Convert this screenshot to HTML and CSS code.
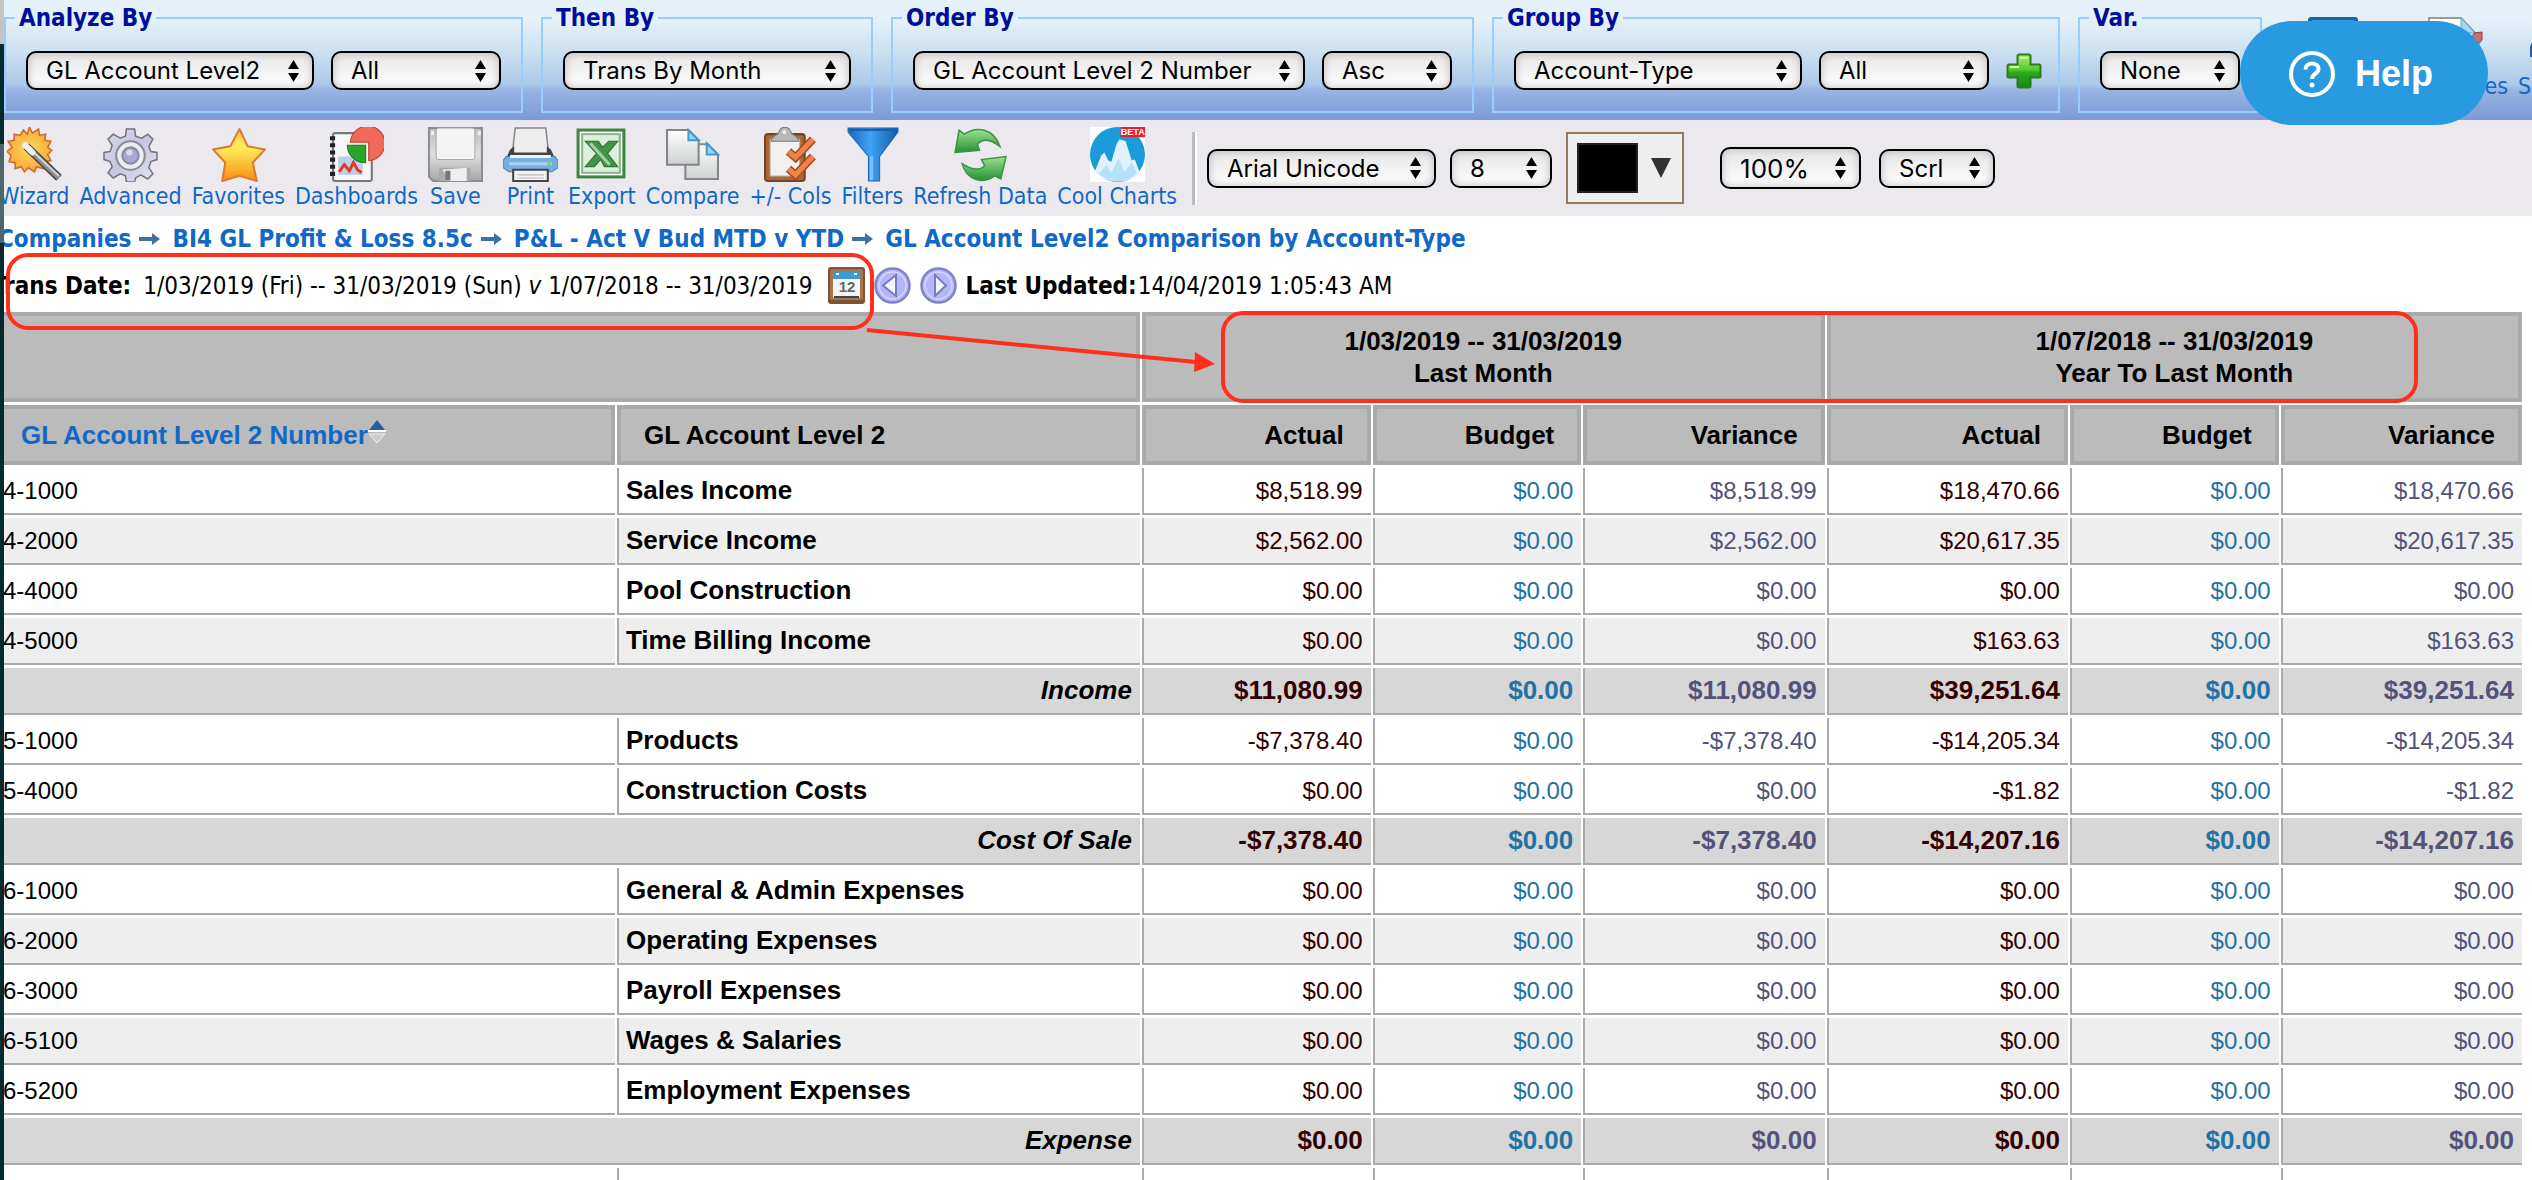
FILE: index.html
```html
<!DOCTYPE html>
<html lang="en">
<head>
    <meta charset="UTF-8">
    <title>GL Account Level2 Comparison by Account-Type</title>
    <link rel="stylesheet" href="styles.css">
</head>
<body>
    <div class="edge"></div>
    <main class="app">
        <header class="criteria">
            <fieldset>
                <legend>Analyze By</legend>
                <div class="controls">
                    <select class="w-large" aria-label="Analyze by field"><option>GL Account Level2</option></select>
                    <select class="w-medium" aria-label="Analyze by filter"><option>All</option></select>
                </div>
            </fieldset>
            <fieldset>
                <legend>Then By</legend>
                <div class="controls">
                    <select class="w-large" aria-label="Then by field"><option>Trans By Month</option></select>
                </div>
            </fieldset>
            <fieldset>
                <legend>Order By</legend>
                <div class="controls">
                    <select class="w-xlarge" aria-label="Order by field"><option>GL Account Level 2 Number</option></select>
                    <select class="w-small" aria-label="Order direction"><option>Asc</option></select>
                </div>
            </fieldset>
            <fieldset class="group-by">
                <legend>Group By</legend>
                <div class="controls">
                    <select class="w-large" aria-label="Group by field"><option>Account-Type</option></select>
                    <select class="w-medium" aria-label="Group by filter"><option>All</option></select>
                    <button class="icon-button" aria-label="Add group">
                        <svg width="36" height="36" viewBox="0 0 36 36">
                            <defs><linearGradient id="plus" x1="0" y1="0" x2="0" y2="1"><stop offset="0" stop-color="#a8ef6c"/><stop offset=".45" stop-color="#55cc2c"/><stop offset=".55" stop-color="#2fa81c"/><stop offset="1" stop-color="#128a12"/></linearGradient></defs>
                            <path d="M13 1.500h10a1.500 1.500 0 0 1 1.500 1.500v8.500H33a1.500 1.500 0 0 1 1.500 1.500v10a1.500 1.500 0 0 1-1.500 1.500h-8.500V33a1.500 1.500 0 0 1-1.500 1.500H13a1.500 1.500 0 0 1-1.500-1.500v-8.500H3A1.500 1.500 0 0 1 1.500 23V13A1.500 1.500 0 0 1 3 11.500h8.500V3A1.500 1.500 0 0 1 13 1.500z" fill="url(#plus)" stroke="#2c7d1c" stroke-width="2"/>
                            <path d="M14 5h8M4 14h9" stroke="#d6ffb4" stroke-width="2"/>
                        </svg>
                    </button>
                </div>
            </fieldset>
            <fieldset>
                <legend>Var.</legend>
                <div class="controls">
                    <select class="w-variance" aria-label="Variance"><option>None</option></select>
                </div>
            </fieldset>
            <nav class="shortcuts">
                <a href="#" class="screen" aria-label="Screen">
                    <svg width="50" height="54" viewBox="0 0 50 54"><rect x="0" width="50" height="44" rx="3" fill="#1463ad"/><rect x="4" y="3" width="42" height="34" fill="#3f9be0"/></svg>
                </a>
                <a href="#" class="pages">
                    <svg width="55" height="54" viewBox="0 0 55 54"><path d="M1 1h32l14 15v36H1z" fill="#fff" stroke="#999" stroke-width="2"/><path d="M33 1l14 15H33z" fill="#a9d8f5" stroke="#5ba4d2"/><path d="M42 24l4-8 8-1v8l-7 8z" fill="#cc6b6b" stroke="#8d3c3c"/></svg>
                    <span>es</span>
                </a>
                <a href="#" class="more">
                    <svg width="50" height="54" viewBox="0 0 50 54"><path d="M0 30L8 10h30v30H0z" fill="#2a5ca8"/></svg>
                    <span>S</span>
                </a>
            </nav>
        </header>

        <div class="toolbar">
            <a href="#">
                <svg viewBox="0 0 54 54">
                    <defs><radialGradient id="sun"><stop offset="0" stop-color="#ffd95e"/><stop offset="1" stop-color="#f8a93a"/></radialGradient></defs>
                    <path d="M22 0l3 6 6-4 1 6 6-1-1 6 6 1-3 6 4 3-4 4 3 6-6 1-1 7-7-2-2 5-6-4-4 4-3-5-6 2v-6l-6-1 2-6-4-4 5-4-4-6 6-1v-6l6 1 3-5 4 4z" fill="url(#sun)" stroke="#cf6a24" stroke-width="1.500"/>
                    <path d="M19 19L51 50" stroke="#444" stroke-width="8"/>
                    <path d="M19 19L51 50" stroke="#8d8d8d" stroke-width="5"/>
                    <path d="M20 19L51 48" stroke="#d2d2d2" stroke-width="2"/>
                    <path d="M18 18l7 7" stroke="#eee" stroke-width="6" stroke-linecap="round"/>
                </svg>
                <span>Wizard</span>
            </a>
            <a href="#">
                <svg viewBox="0 0 54 54">
                    <defs><linearGradient id="gear" x1="0" y1="0" x2="1" y2="1"><stop offset="0" stop-color="#d9d9e6"/><stop offset=".5" stop-color="#c6c6e0"/><stop offset="1" stop-color="#e6e6f2"/></linearGradient></defs>
                    <path d="M23 2h8l1 7 6 2 6-4 5 5-4 7 2 5 6 1v7l-6 2-2 6 4 6-5 5-7-4-5 3-1 4h-8l-1-6-5-2-7 4-5-5 4-6-2-5-6-2v-7l6-1 2-6-4-6 5-5 7 4 5-2z" fill="url(#gear)" stroke="#74747f" stroke-width="1.500"/>
                    <circle cx="27" cy="28" r="14" fill="#ececf2" stroke="#8b8b95" stroke-width="2"/>
                    <circle cx="27" cy="28" r="8" fill="#a9a9cf" stroke="#8a8aa0" stroke-width="2"/>
                    <circle cx="26" cy="25" r="3" fill="#dcdcf0"/>
                </svg>
                <span>Advanced</span>
            </a>
            <a href="#">
                <svg viewBox="0 0 54 54">
                    <defs><linearGradient id="star" x1="0" y1="0" x2="0" y2="1"><stop offset="0" stop-color="#ffc83a"/><stop offset=".35" stop-color="#fff05a"/><stop offset="1" stop-color="#f78c12"/></linearGradient></defs>
                    <path d="M28 2l8 17 17 3-12 13 4 18-17-5-17 5 3-18L2 22l17-3z" fill="url(#star)" stroke="#d97a35" stroke-width="2" stroke-linejoin="round"/>
                </svg>
                <span>Favorites</span>
            </a>
            <a href="#">
                <svg viewBox="0 0 54 54">
                    <rect x="4" y="6" width="38" height="47" rx="2" fill="#f6f6f6" stroke="#777" stroke-width="2"/>
                    <rect x="9" y="29" width="24" height="18" fill="#bccdee"/>
                    <path d="M1 11h5M1 18h5M1 25h5M1 32h5M1 39h5M1 46h5" stroke="#222" stroke-width="4"/>
                    <path d="M21 15A17 17 0 1 1 39 33V15z" fill="#f0695a" stroke="#c43d30"/>
                    <path d="M18 18h18v17A17 17 0 0 1 18 18z" fill="#2aa52c" stroke="#177a1b"/>
                    <path d="M10 44l5-7 5 6 4-8 4 7 4 3" fill="none" stroke="#dc3b22" stroke-width="3"/>
                </svg>
                <span>Dashboards</span>
            </a>
            <a href="#">
                <svg viewBox="0 0 54 54">
                    <defs><linearGradient id="disk" x1="0" y1="0" x2="0" y2="1"><stop offset="0" stop-color="#bdbdbd"/><stop offset=".5" stop-color="#dedede"/><stop offset="1" stop-color="#a6a6a6"/></linearGradient></defs>
                    <path d="M1 1h52v52H5l-4-4z" fill="url(#disk)" stroke="#8d8d8d" stroke-width="2"/>
                    <rect x="8" y="1" width="38" height="31" rx="3" fill="#f4f4f4" stroke="#aaa"/>
                    <path d="M11 40h31v13H11z" fill="#aaa"/><path d="M14 42l24-2v13H22z" fill="#efefef"/><path d="M17 43h5v9h-5z" fill="#777"/>
                    <path d="M3 4h3v4H3zM49 4h3v4h-3z" fill="#eee"/>
                </svg>
                <span>Save</span>
            </a>
            <a href="#" class="print">
                <svg viewBox="0 0 54 54">
                    <path d="M12 1h30l3 27H9z" fill="#eee" stroke="#888" stroke-width="1.500"/>
                    <path d="M7 22l4-3v6h32v-6l4 3 5 11H2z" fill="#444"/>
                    <path d="M3 29h48l3 4v7l-6 4H6l-6-4v-7z" fill="#76aee2" stroke="#477db4"/>
                    <path d="M7 29h40" stroke="#eaf5ff" stroke-width="3"/><path d="M6 36h42" stroke="#a8d1f5" stroke-width="3"/>
                    <path d="M10 42h34v11H10z" fill="#f3f3f3" stroke="#444" stroke-width="2"/><path d="M14 47h26M14 50h26" stroke="#bbb"/><circle cx="45" cy="36" r="2" fill="#6fe04f"/>
                </svg>
                <span>Print</span>
            </a>
            <a href="#">
                <svg viewBox="0 0 54 54">
                    <rect x="4" y="3" width="45" height="46" fill="#fff" stroke="#3e8540" stroke-width="3"/>
                    <rect x="8" y="7" width="37" height="38" fill="#dcefdc" stroke="#87b787" stroke-width="2"/>
                    <path d="M11 14h13l4 6 6-6h9L33 26l10 13H30l-4-7-6 7h-9l11-13z" fill="#459348" stroke="#286c2c"/>
                    <path d="M16 16l19 21" stroke="#a0d3a2" stroke-width="3"/>
                </svg>
                <span>Export</span>
            </a>
            <a href="#">
                <svg viewBox="0 0 54 54">
                    <defs><linearGradient id="paper" x1="0" y1="0" x2="0" y2="1"><stop offset="0" stop-color="#fff"/><stop offset="1" stop-color="#ccd0d0"/></linearGradient></defs>
                    <path d="M20 17h22l10 10v24H20z" fill="url(#paper)" stroke="#858585" stroke-width="2"/><path d="M41 16l11 11H41z" fill="#9bd6fa" stroke="#4597d2" stroke-width="2"/>
                    <path d="M2 3h21l10 10v24H2z" fill="url(#paper)" stroke="#858585" stroke-width="2"/><path d="M23 3l10 10H23z" fill="#9bd6fa" stroke="#4597d2" stroke-width="2"/>
                </svg>
                <span>Compare</span>
            </a>
            <a href="#">
                <svg viewBox="0 0 54 54">
                    <rect x="2" y="7" width="39" height="46" rx="3" fill="#a96836" stroke="#784320" stroke-width="2"/>
                    <path d="M7 12h29v36H7z" fill="#f1f1f1" stroke="#b6b6b6"/>
                    <path d="M8 14c0-6 7-5 8-10 2-5 9-5 11 0 1 5 8 4 8 10z" fill="#b7b7b7" stroke="#777"/><circle cx="21" cy="5" r="2" fill="#eee"/>
                    <path d="M25 24l7 6 17-18M25 41l7 6 17-18" fill="none" stroke="#9f4b1d" stroke-width="8"/>
                    <path d="M25 24l7 6 17-18M25 41l7 6 17-18" fill="none" stroke="#ef8149" stroke-width="5"/>
                </svg>
                <span>+/- Cols</span>
            </a>
            <a href="#">
                <svg viewBox="0 0 54 54">
                    <defs><linearGradient id="funnel"><stop offset="0" stop-color="#1668bd"/><stop offset=".45" stop-color="#3fa2f5"/><stop offset="1" stop-color="#1259aa"/></linearGradient></defs>
                    <path d="M3 1h49v4L34 29v24H23V29L3 5z" fill="url(#funnel)" stroke="#2167ad"/>
                    <path d="M4 2h47v2H4z" fill="#1b5fa5"/><path d="M26 29v23" stroke="#79c2ff" stroke-width="3"/>
                </svg>
                <span>Filters</span>
            </a>
            <a href="#">
                <svg viewBox="0 0 54 54">
                    <defs><linearGradient id="fresh" x1="0" y1="0" x2="0" y2="1"><stop offset="0" stop-color="#9be38b"/><stop offset="1" stop-color="#269036"/></linearGradient></defs>
                    <path d="M6 3l5 4C23-1 40 1 46 19c-9-7-17-8-22-2l2 6L2 25z" fill="url(#fresh)" stroke="#3c9447" stroke-width="1.500"/>
                    <path d="M52 29l-5 22-6-3C29 57 13 52 9 36c9 6 17 7 22 2l-3-6z" fill="url(#fresh)" stroke="#3c9447" stroke-width="1.500"/>
                </svg>
                <span>Refresh Data</span>
            </a>
            <a href="#">
                <svg viewBox="0 0 54 54">
                    <rect width="54" height="54" fill="#fff"/><circle cx="27" cy="27" r="27" fill="#1b9bd9"/>
                    <path d="M5 43l6-15 3-3 4 8 3 1 5-17 3-5 6 2 6 19 3-1 5 13C40 56 13 57 5 43z" fill="#e2f1fb"/>
                    <path d="M9 46l7-9 5 8 7-14 6 13 7-9 5 10C35 57 19 55 9 46z" fill="#b5e0f7"/>
                    <rect x="30" width="24" height="10" fill="#ee1c2e"/><text x="42" y="8" class="beta">BETA</text>
                </svg>
                <span>Cool Charts</span>
            </a>
            <div class="divider"></div>
            <div class="format">
                <select class="font-name" aria-label="Font"><option>Arial Unicode</option></select>
                <select class="font-size" aria-label="Font size"><option>8</option></select>
                <button class="color-picker" aria-label="Font colour"><span class="swatch"></span><span class="caret"></span></button>
                <select class="zoom" aria-label="Zoom"><option>100%</option></select>
                <select class="scroll-mode" aria-label="Scroll mode"><option>Scrl</option></select>
            </div>
        </div>

        <nav class="breadcrumbs">
            <a href="#">Companies</a>
            <svg width="21" height="12" viewBox="0 0 21 12"><path d="M0 4h13V0l8 6-8 6V8H0z" fill="#3f719f"/></svg>
            <a href="#">BI4 GL Profit &amp; Loss 8.5c</a>
            <svg width="21" height="12" viewBox="0 0 21 12"><path d="M0 4h13V0l8 6-8 6V8H0z" fill="#3f719f"/></svg>
            <a href="#">P&amp;L - Act V Bud MTD v YTD</a>
            <svg width="21" height="12" viewBox="0 0 21 12"><path d="M0 4h13V0l8 6-8 6V8H0z" fill="#3f719f"/></svg>
            <a href="#">GL Account Level2 Comparison by Account-Type</a>
        </nav>

        <div class="dates">
            <b>Trans Date:</b>
            <span class="range">1/03/2019 (Fri) -- 31/03/2019 (Sun) <i>v</i> 1/07/2018 -- 31/03/2019</span>
            <button class="icon-button" aria-label="Choose dates">
                <svg width="37" height="37" viewBox="0 0 37 37"><rect width="37" height="37" rx="3" fill="#7c5334"/><rect x="2" y="2" width="33" height="31" rx="2" fill="#a9744c"/><rect x="5" y="5" width="27" height="26" rx="1" fill="#f5f5f5"/><path d="M5 5h27v7H5z" fill="#3b9bd8"/><path d="M8 7h3M26 7h3" stroke="#fff" stroke-width="2"/><path d="M6 30h25" stroke="#444" stroke-width="2"/><text x="19" y="25" class="day">12</text></svg>
            </button>
            <button class="icon-button" aria-label="Previous period">
                <svg width="37" height="37" viewBox="0 0 37 37"><circle cx="18.500" cy="18.500" r="17" fill="#b5b5fa" stroke="#8383c8" stroke-width="2.500"/><circle cx="18.500" cy="18.500" r="13.500" fill="none" stroke="#d7d7ff" stroke-width="1.500"/><path d="M22 8v21L9 18.500z" fill="#f4f4ff" stroke="#7979bd" stroke-width="2"/></svg>
            </button>
            <button class="icon-button" aria-label="Next period">
                <svg width="37" height="37" viewBox="0 0 37 37"><circle cx="18.500" cy="18.500" r="17" fill="#b5b5fa" stroke="#8383c8" stroke-width="2.500"/><circle cx="18.500" cy="18.500" r="13.500" fill="none" stroke="#d7d7ff" stroke-width="1.500"/><path d="M15 8v21l11-10.500z" fill="#f4f4ff" stroke="#7979bd" stroke-width="2"/></svg>
            </button>
            <b>Last Updated:</b>
            <span class="updated">14/04/2019 1:05:43 AM</span>
        </div>

        <table>
            <colgroup>
                <col class="col-number"><col class="col-name">
                <col class="col-actual"><col class="col-budget"><col class="col-variance">
                <col class="col-variance"><col class="col-budget"><col class="col-variance">
            </colgroup>
            <thead>
                <tr class="periods">
                    <th colspan="2"></th>
                    <th colspan="3">1/03/2019 -- 31/03/2019<br>Last Month</th>
                    <th colspan="3">1/07/2018 -- 31/03/2019<br>Year To Last Month</th>
                </tr>
                <tr class="columns">
                    <th class="name"><a href="#">GL Account Level 2 Number<svg width="18" height="24" viewBox="0 0 18 24"><path d="M9 0l8 10H1z" fill="#2a6099"/><path d="M0 11h18" stroke="#fff" stroke-width="2"/><path d="M1 14h16l-8 9z" fill="#ccc" stroke="#eee"/></svg></a></th>
                    <th class="name">GL Account Level 2</th>
                    <th>Actual</th><th>Budget</th><th>Variance</th>
                    <th>Actual</th><th>Budget</th><th>Variance</th>
                </tr>
            </thead>
            <tbody>
                <tr><td>4-1000</td><th>Sales Income</th><td class="a">$8,518.99</td><td class="b">$0.00</td><td class="v">$8,518.99</td><td class="a">$18,470.66</td><td class="b">$0.00</td><td class="v">$18,470.66</td></tr>
                <tr class="alt"><td>4-2000</td><th>Service Income</th><td class="a">$2,562.00</td><td class="b">$0.00</td><td class="v">$2,562.00</td><td class="a">$20,617.35</td><td class="b">$0.00</td><td class="v">$20,617.35</td></tr>
                <tr><td>4-4000</td><th>Pool Construction</th><td class="a">$0.00</td><td class="b">$0.00</td><td class="v">$0.00</td><td class="a">$0.00</td><td class="b">$0.00</td><td class="v">$0.00</td></tr>
                <tr class="alt"><td>4-5000</td><th>Time Billing Income</th><td class="a">$0.00</td><td class="b">$0.00</td><td class="v">$0.00</td><td class="a">$163.63</td><td class="b">$0.00</td><td class="v">$163.63</td></tr>
                <tr class="total"><th colspan="2">Income</th><td class="a">$11,080.99</td><td class="b">$0.00</td><td class="v">$11,080.99</td><td class="a">$39,251.64</td><td class="b">$0.00</td><td class="v">$39,251.64</td></tr>
                <tr><td>5-1000</td><th>Products</th><td class="a">-$7,378.40</td><td class="b">$0.00</td><td class="v">-$7,378.40</td><td class="a">-$14,205.34</td><td class="b">$0.00</td><td class="v">-$14,205.34</td></tr>
                <tr><td>5-4000</td><th>Construction Costs</th><td class="a">$0.00</td><td class="b">$0.00</td><td class="v">$0.00</td><td class="a">-$1.82</td><td class="b">$0.00</td><td class="v">-$1.82</td></tr>
                <tr class="total"><th colspan="2">Cost Of Sale</th><td class="a">-$7,378.40</td><td class="b">$0.00</td><td class="v">-$7,378.40</td><td class="a">-$14,207.16</td><td class="b">$0.00</td><td class="v">-$14,207.16</td></tr>
                <tr><td>6-1000</td><th>General &amp; Admin Expenses</th><td class="a">$0.00</td><td class="b">$0.00</td><td class="v">$0.00</td><td class="a">$0.00</td><td class="b">$0.00</td><td class="v">$0.00</td></tr>
                <tr class="alt"><td>6-2000</td><th>Operating Expenses</th><td class="a">$0.00</td><td class="b">$0.00</td><td class="v">$0.00</td><td class="a">$0.00</td><td class="b">$0.00</td><td class="v">$0.00</td></tr>
                <tr><td>6-3000</td><th>Payroll Expenses</th><td class="a">$0.00</td><td class="b">$0.00</td><td class="v">$0.00</td><td class="a">$0.00</td><td class="b">$0.00</td><td class="v">$0.00</td></tr>
                <tr class="alt"><td>6-5100</td><th>Wages &amp; Salaries</th><td class="a">$0.00</td><td class="b">$0.00</td><td class="v">$0.00</td><td class="a">$0.00</td><td class="b">$0.00</td><td class="v">$0.00</td></tr>
                <tr><td>6-5200</td><th>Employment Expenses</th><td class="a">$0.00</td><td class="b">$0.00</td><td class="v">$0.00</td><td class="a">$0.00</td><td class="b">$0.00</td><td class="v">$0.00</td></tr>
                <tr class="total"><th colspan="2">Expense</th><td class="a">$0.00</td><td class="b">$0.00</td><td class="v">$0.00</td><td class="a">$0.00</td><td class="b">$0.00</td><td class="v">$0.00</td></tr>
                <tr><td></td><th></th><td></td><td></td><td></td><td></td><td></td><td></td></tr>
            </tbody>
        </table>

        <div class="mark mark-dates"></div>
        <div class="mark mark-periods"></div>
        <svg class="mark-arrow" width="350" height="50" viewBox="0 0 350 50"><path d="M1 10L330 42" stroke="#ff2f1c" stroke-width="4"/><path d="M329 32l20 12-21 8z" fill="#ff2f1c"/></svg>
    </main>

    <button class="help">
        <svg width="46" height="46" viewBox="0 0 46 46" fill="none" stroke="#fff"><circle cx="23" cy="23" r="21" stroke-width="4"/><path d="M16.500 18.500c0-4 3-6 6.500-6s6.500 2 6.500 5.500c0 5-6.500 4.500-6.500 10" stroke-width="4"/><circle cx="23" cy="34" r="2.500" fill="#fff" stroke="none"/></svg>
        Help
    </button>
</body>
</html>
```
FILE: styles.css
```css
* {
    box-sizing: border-box;
}
body {
    margin: 0;
    display: flex;
    height: 100vh;
    overflow: hidden;
    background: #fff;
    color: #000;
    font-family: Tahoma, 'DejaVu Sans Condensed', 'DejaVu Sans', sans-serif;
    font-size: 24px;
}
a {
    color: #1068c8;
    text-decoration: none;
}
svg {
    display: block;
}
.edge {
    flex: 0 0 4px;
    background: linear-gradient(#c4c4c4 44px, #04292f 44px, #04292f 144px, #4d666b 144px, #4d666b 243px, #04292f 243px);
}
.app {
    position: relative;
    flex: 1;
    min-width: 0;
    overflow: hidden;
}

/* criteria bar */
.criteria {
    display: flex;
    gap: 18px;
    height: 120px;
    padding-top: 3px;
    white-space: nowrap;
    background: linear-gradient(#e4f1f8 20px, #d2e5f2 44px, #adc9e9 84px, #98b4e3 90px, #7b9ad6 120px);
}
fieldset {
    flex: none;
    min-width: 0;
    height: 110px;
    margin: 0;
    padding: 20px 20px 0;
    border: 2px solid #99ccff;
}
fieldset.group-by {
    padding-right: 16px;
}
legend {
    margin-left: -11px;
    padding: 0 4px;
    line-height: 30px;
    font-weight: bold;
    color: #000e99;
}
.controls {
    display: flex;
    align-items: center;
    gap: 17px;
    margin-top: -2px;
}
select {
    appearance: none;
    height: 39px;
    padding: 0 18px;
    border: 2px solid #000;
    border-radius: 10px;
    font-family: Inter, sans-serif;
    font-size: 24px;
    color: #000;
    background: url("data:image/svg+xml,%3Csvg xmlns='http://www.w3.org/2000/svg' width='11' height='22'%3E%3Cpath d='M0 9L5.500 0 11 9zM0 13h11l-5.500 9z'/%3E%3C/svg%3E") no-repeat right 13px center, linear-gradient(#e5e5e5, #fff);
    box-shadow: inset 0 0 8px #bbb;
}
.w-small { width: 130px; }
.w-variance { width: 140px; }
.w-medium { width: 170px; }
.w-large { width: 288px; }
.w-xlarge { width: 392px; }
.icon-button {
    padding: 0;
    border: 0;
    background: none;
    cursor: pointer;
}
.shortcuts {
    display: flex;
    padding: 14px 0 0 28px;
    font-size: 23px;
}
.shortcuts a {
    flex: none;
    line-height: 30px;
}
.shortcuts .screen {
    width: 95px;
}
.shortcuts .pages {
    width: 105px;
    margin-right: 10px;
    text-align: right;
}
.shortcuts .pages svg {
    margin: 0 auto;
}
.shortcuts .more svg {
    margin-left: 12px;
}

/* toolbar */
.toolbar {
    display: flex;
    gap: 10px;
    height: 96px;
    padding: 7px 0 0;
    margin-left: -5px;
    white-space: nowrap;
    font-size: 23px;
    background: #ebe9ee;
}
.toolbar a {
    display: flex;
    flex-direction: column;
    align-items: center;
    line-height: 29px;
}
.toolbar a svg {
    width: 55px;
    height: 55px;
}
.toolbar .print {
    margin-left: 10px;
}
.beta {
    font: bold 9px 'Liberation Sans', sans-serif;
    fill: #fff;
    text-anchor: middle;
}
.divider {
    width: 5px;
    height: 73px;
    margin: 5px 0 0 5px;
    border-left: 3px solid #bbb;
    background: #fff;
}
.format {
    display: flex;
    align-items: center;
    gap: 14px;
    height: 82px;
}
.font-name { width: 229px; }
.font-size { width: 102px; }
.format .zoom {
    width: 141px;
    height: 42px;
    margin-left: 22px;
    font-size: 26px;
}
.scroll-mode {
    width: 116px;
    margin-left: 4px;
}
.color-picker {
    display: flex;
    align-items: center;
    gap: 13px;
    width: 118px;
    height: 72px;
    padding: 0 9px;
    border: 2px solid #94785f;
    background: #eee;
}
.swatch {
    width: 61px;
    height: 50px;
    border: 2px solid #222;
    background: #000;
}
.caret {
    border: 10px solid transparent;
    border-top: 20px solid #333;
    border-bottom: 0;
}

/* breadcrumbs and dates */
.breadcrumbs {
    display: flex;
    align-items: center;
    height: 42px;
    padding-top: 4px;
    margin-left: -6px;
    font-weight: bold;
    white-space: nowrap;
}
.breadcrumbs svg {
    margin: 0 12px 0 8px;
}
.dates {
    display: flex;
    align-items: center;
    gap: 9px;
    height: 51px;
    padding-top: 4px;
    margin-left: -12px;
    white-space: nowrap;
}
.range {
    margin: 0 6px 0 3px;
}
.updated {
    margin-left: -8px;
}
.day {
    font: bold 15px 'Liberation Sans', sans-serif;
    fill: #666;
    text-anchor: middle;
}

/* report */
table {
    width: calc(100% + 4px);
    margin-left: -12px;
    table-layout: fixed;
    border-collapse: separate;
    border-spacing: 2px 3px;
    font-family: 'Liberation Sans', Arial, sans-serif;
    font-size: 24px;
}
.col-number { width: 24.7%; }
.col-name { width: 20.8%; }
.col-actual { width: 9.1%; }
.col-budget { width: 8.3%; }
.col-variance { width: 9.6%; }
th {
    font-size: 26px;
}
thead th {
    padding: 0 23px;
    border: 4px solid #aaa;
    background: #bbb;
    line-height: 32px;
    text-align: right;
}
.periods th {
    height: 90px;
    text-align: center;
}
.columns th {
    height: 60px;
}
.columns .name {
    text-align: left;
}
.columns svg {
    display: inline-block;
}
tbody td, tbody th {
    height: 47px;
    padding: 0 8px 0 7px;
    border-left: 2px solid #aaa;
    border-bottom: 2px solid #aaa;
    text-align: left;
}
.alt td, .alt th {
    background: #eee;
}
tbody .a, tbody .b, tbody .v {
    text-align: right;
}
.a { color: #330000; }
.b { color: #2372a3; }
.v { color: #53537a; }
.total td, .total th {
    background: #d7d7d7;
    font-size: 26px;
    font-weight: bold;
    text-align: right;
}
.total th {
    font-style: italic;
}

/* annotations over the report */
.mark {
    position: absolute;
    border: 4px solid #ff2f1c;
    border-radius: 22px;
}
.mark-dates {
    top: 253px;
    left: 2px;
    width: 868px;
    height: 77px;
}
.mark-periods {
    top: 311px;
    left: 1217px;
    width: 1197px;
    height: 92px;
}
.mark-arrow {
    position: absolute;
    top: 320px;
    left: 862px;
    overflow: visible;
}

.help {
    position: absolute;
    top: 21px;
    right: 44px;
    display: flex;
    align-items: center;
    justify-content: center;
    gap: 20px;
    width: 248px;
    height: 104px;
    padding: 2px 6px 0 0;
    border: 0;
    border-radius: 52px;
    background: #289adf;
    color: #fff;
    font: bold 36px 'Liberation Sans', Arial, sans-serif;
}
```
